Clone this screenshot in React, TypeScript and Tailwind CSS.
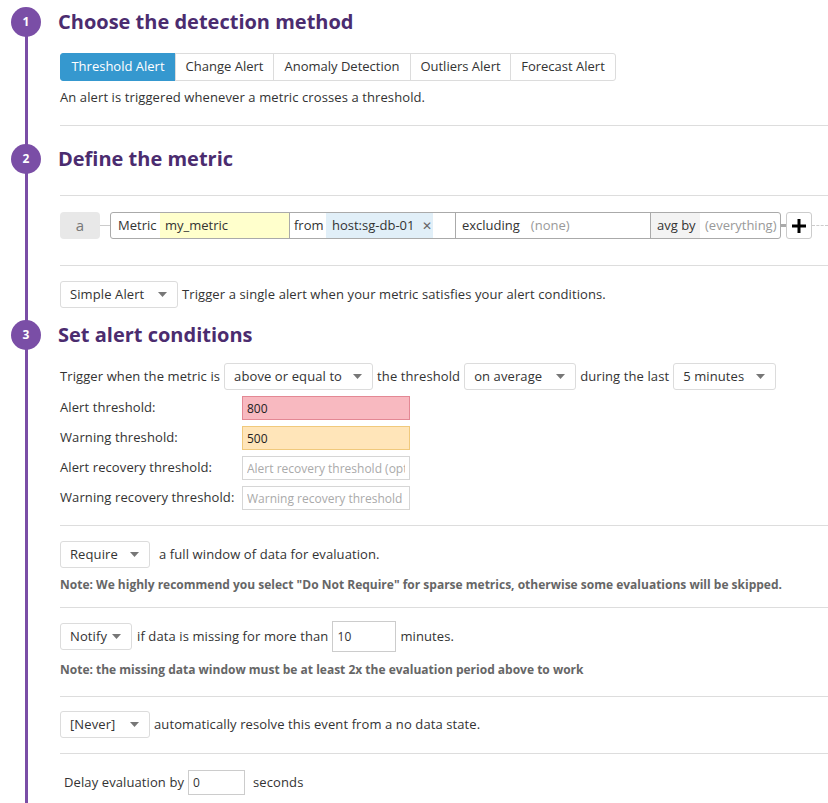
import React from 'react';

const font = { fontFamily: '"Open Sans", "Noto Sans", sans-serif' };

function Caret() {
  return (
    <svg width="9" height="5" viewBox="0 0 9 5" className="shrink-0">
      <path d="M0 0 L9 0 L4.5 5 Z" fill="#777" />
    </svg>
  );
}

function Select({ label, className }: { label: string; className: string }) {
  return (
    <div
      className={`flex h-[27px] shrink-0 items-center justify-between rounded-[3px] border border-[#dcdcdc] bg-white pl-[9px] pr-[10px] text-[13px] text-[#333] ${className}`}
    >
      <span>{label}</span>
      <Caret />
    </div>
  );
}

function Step({ n, title }: { n: number; title: string }) {
  return (
    <div className="relative -ml-[2px] flex h-[28px] items-center tracking-normal">
      <div className="absolute left-[-47px] top-1/2 flex h-[30px] w-[30px] -translate-y-1/2 items-center justify-center rounded-full bg-[#7a4ea6] text-[12px] font-bold text-white">
        {n}
      </div>
      <h2 className="text-[20px] font-bold leading-[28px] text-[#4b2c6f]">{title}</h2>
    </div>
  );
}

function Hr({ className }: { className: string }) {
  return <div className={`h-px bg-[#dddddd] ${className}`} />;
}

function ThresholdRow({
  label,
  value,
  placeholder,
  tone,
}: {
  label: string;
  value?: string;
  placeholder?: string;
  tone: 'alert' | 'warn' | 'none';
}) {
  const box =
    tone === 'alert'
      ? 'bg-[#f8b9c0] border-[#e38894] text-[#222]'
      : tone === 'warn'
        ? 'bg-[#ffe5b9] border-[#f0c97c] text-[#222]'
        : 'bg-white border-[#d6d6d6]';
  return (
    <div className="flex h-[24px] items-center">
      <div className="w-[182px] shrink-0 text-[13px] text-[#333]">{label}</div>
      <input
        readOnly
        defaultValue={value}
        placeholder={placeholder}
        className={`h-[24px] w-[168px] border px-[4px] text-[12px] tracking-normal outline-none placeholder:text-[#aaa] ${box}`}
      />
    </div>
  );
}

export default function App() {
  const tabs = [
    { t: 'Threshold Alert', w: 'w-[116px]' },
    { t: 'Change Alert', w: 'w-[99px]' },
    { t: 'Anomaly Detection', w: 'w-[138px]' },
    { t: 'Outliers Alert', w: 'w-[101px]' },
    { t: 'Forecast Alert', w: 'w-[106px]' },
  ];

  return (
    <div
      className="relative min-h-[803px] w-[828px] overflow-hidden bg-white pl-[60px] text-[13px] tracking-[0.1px] text-[#333]"
      style={font}
    >
      {/* timeline */}
      <div className="absolute bottom-0 left-[25px] top-[22px] w-[3px] bg-[#7a4ea6]" />

      <div className="pt-[8px]">
        <Step n={1} title="Choose the detection method" />
      </div>

      <div className="mt-[17px] flex tracking-normal">
        {tabs.map((tab, i) => (
          <div
            key={tab.t}
            className={`flex h-[28px] items-center justify-center border text-[13px] ${tab.w} ${
              i === 0
                ? 'rounded-l-[3px] border-[#3598cf] bg-[#3598cf] text-white'
                : '-ml-px border-[#dcdcdc] bg-white text-[#333]'
            } ${i === tabs.length - 1 ? 'rounded-r-[3px]' : ''}`}
          >
            {tab.t}
          </div>
        ))}
      </div>
      <p className="mt-[7px] leading-[18px]">An alert is triggered whenever a metric crosses a threshold.</p>

      <Hr className="mt-[19px]" />

      <div className="mt-[19px]">
        <Step n={2} title="Define the metric" />
      </div>

      <Hr className="mt-[22px]" />

      {/* metric query row */}
      <div className="mt-[16px] flex h-[27px] items-center tracking-normal">
        <div className="flex h-[27px] w-[40px] items-center justify-center rounded-[4px] bg-[#e8e8e8] text-[15px] text-[#777]">a</div>
        <div className="h-px w-[10px] bg-[#ccc]" />
        <div className="flex h-[27px] w-[671px] items-stretch overflow-hidden rounded-[3px] border border-[#aaa] text-[13px]">
          <div className="flex w-[49px] items-center pl-[7px]">Metric</div>
          <div className="flex w-[129px] items-center bg-[#ffffcc] pl-[5px]">my_metric</div>
          <div className="flex w-[37px] items-center border-l border-[#aaa] pl-[4px]">from</div>
          <div className="flex w-[107px] items-center gap-[8px] bg-[#e1eff8] pl-[6px]">
            <span>host:sg-db-01</span>
            <span className="text-[12px] text-[#666]">✕</span>
          </div>
          <div className="w-[22px]" />
          <div className="flex w-[195px] items-center border-l border-[#aaa] pl-[6px]">
            <span>excluding</span>
            <span className="ml-[11px] text-[#999]">(none)</span>
          </div>
          <div className="flex w-[50px] items-center border-l border-[#aaa] bg-[#f3f3f3] pl-[6px]">avg by</div>
          <div className="flex flex-1 items-center pl-[5px] text-[#999]">(everything)</div>
        </div>
        <div className="h-[3px] w-[5px] bg-[#aaa]" />
        <div className="flex h-[27px] w-[26px] items-center justify-center rounded-[3px] border border-[#ccc] bg-white">
          <svg width="14" height="14" viewBox="0 0 14 14">
            <rect x="5.5" y="0" width="3" height="14" fill="#000" />
            <rect x="0" y="5.5" width="14" height="3" fill="#000" />
          </svg>
        </div>
        <div className="flex-1 border-t border-dashed border-[#ccc]" />
      </div>

      <Hr className="mt-[26px]" />

      <div className="mt-[15px] flex items-center gap-[4px]">
        <Select label="Simple Alert" className="w-[118px]" />
        <span>Trigger a single alert when your metric satisfies your alert conditions.</span>
      </div>

      <div className="mt-[13px]">
        <Step n={3} title="Set alert conditions" />
      </div>

      <div className="mt-[14px] flex items-center gap-[4px] whitespace-nowrap">
        <span>Trigger when the metric is</span>
        <Select label="above or equal to" className="w-[149px]" />
        <span>the threshold</span>
        <Select label="on average" className="w-[112px]" />
        <span>during the last</span>
        <Select label="5 minutes" className="w-[103px]" />
      </div>

      <div className="mt-[6px] flex flex-col gap-[6px]">
        <ThresholdRow label="Alert threshold:" value="800" tone="alert" />
        <ThresholdRow label="Warning threshold:" value="500" tone="warn" />
        <ThresholdRow label="Alert recovery threshold:" placeholder="Alert recovery threshold (optional)" tone="none" />
        <ThresholdRow label="Warning recovery threshold:" placeholder="Warning recovery threshold (optional)" tone="none" />
      </div>

      <Hr className="mt-[15px]" />

      <div className="mt-[15px] flex items-center gap-[9px]">
        <Select label="Require" className="w-[90px]" />
        <span>a full window of data for evaluation.</span>
      </div>
      <p className="mt-[9px] text-[12px] font-bold leading-[16px] tracking-normal text-[#666]">
        Note: We highly recommend you select "Do Not Require" for sparse metrics, otherwise some evaluations will be skipped.
      </p>

      <Hr className="mt-[14px]" />

      <div className="mt-[13px] flex h-[31px] items-center">
        <Select label="Notify" className="w-[72px]" />
        <span className="ml-[5px]">if data is missing for more than</span>
        <div className="ml-[4px] flex h-[31px] w-[64px] items-center border border-[#ccc] bg-white pl-[4px] text-[12px]">10</div>
        <span className="ml-[4px]">minutes.</span>
      </div>
      <p className="mt-[10px] text-[12px] font-bold leading-[16px] tracking-normal text-[#666]">
        Note: the missing data window must be at least 2x the evaluation period above to work
      </p>

      <Hr className="mt-[18px]" />

      <div className="mt-[14px] flex items-center gap-[4px]">
        <Select label="[Never]" className="w-[90px]" />
        <span>automatically resolve this event from a no data state.</span>
      </div>

      <Hr className="mt-[15px]" />

      <div className="mt-[16px] flex h-[25px] items-center pl-[4px]">
        <span>Delay evaluation by</span>
        <div className="ml-[4px] flex h-[25px] w-[57px] items-center border border-[#ccc] bg-white pl-[4px] text-[12px]">0</div>
        <span className="ml-[8px]">seconds</span>
      </div>
    </div>
  );
}
